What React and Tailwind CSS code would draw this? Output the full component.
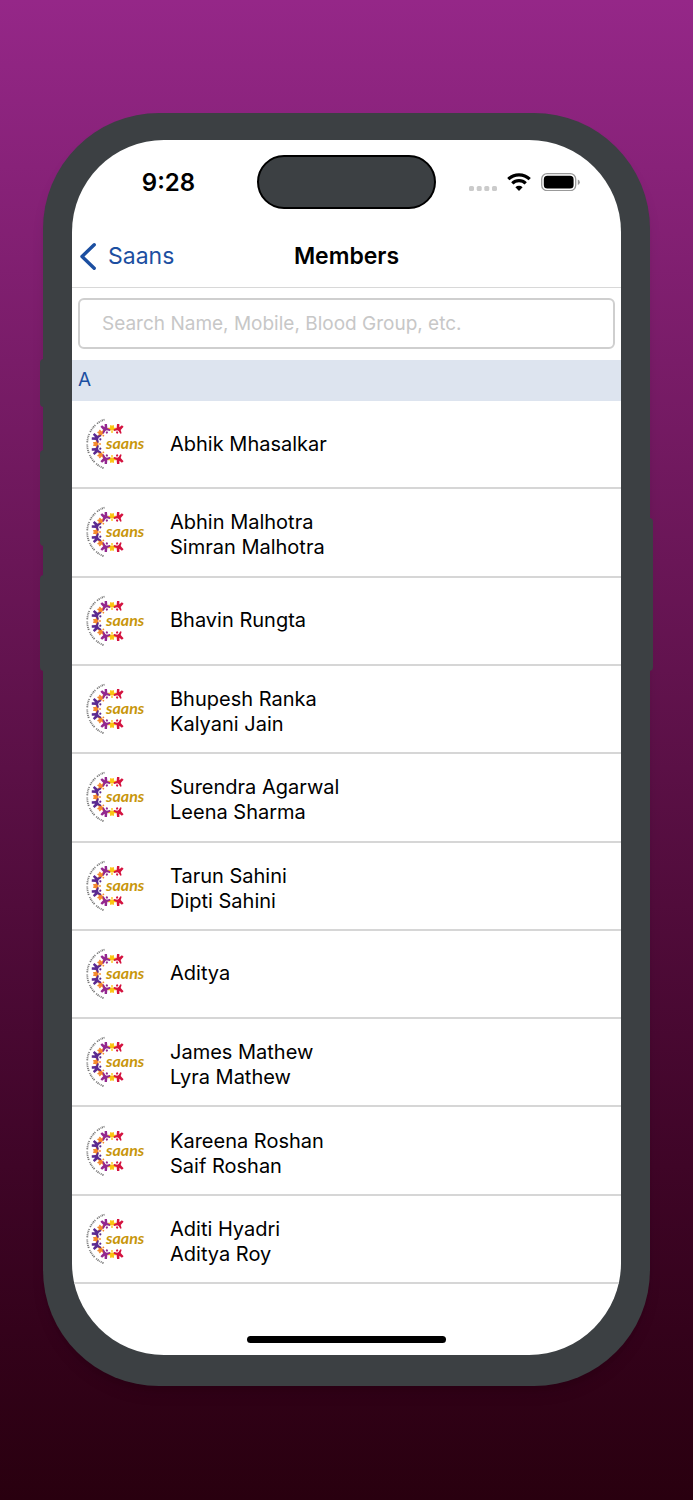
import React from "react";

const members = [
    ["Abhik Mhasalkar"],
    ["Abhin Malhotra", "Simran Malhotra"],
    ["Bhavin Rungta"],
    ["Bhupesh Ranka", "Kalyani Jain"],
    ["Surendra Agarwal", "Leena Sharma"],
    ["Tarun Sahini", "Dipti Sahini"],
    ["Aditya"],
    ["James Mathew", "Lyra Mathew"],
    ["Kareena Roshan", "Saif Roshan"],
    ["Aditi Hyadri", "Aditya Roy"],
];

// people standing around the open ring, angle measured from 12 o'clock
const adults = [
    { angle: 24, color: "#d4123f" },
    { angle: -24, color: "#93278f" },
    { angle: -68, color: "#5b2a91" },
    { angle: -112, color: "#5b2a91" },
    { angle: -156, color: "#93278f" },
    { angle: 156, color: "#d4123f" },
];

const children = [
    { angle: 0, color: "#fbc40f" },
    { angle: -46, color: "#f58a2c" },
    { angle: -90, color: "#f58a2c" },
    { angle: -134, color: "#f58a2c" },
    { angle: 180, color: "#fbc40f" },
];

const SaansLogo = () => (
    <svg viewBox="0 0 60 52" className="w-[60px] h-[52px] shrink-0" role="img" aria-label="Saans">
        <path
            d="M18.5 1.5 A26 26 0 0 0 18.5 50.5"
            fill="none"
            stroke="#777"
            strokeWidth="1.8"
            strokeDasharray="1 0.8 1.2 0.7 0.8 0.9 1.1 0.8 1.3 2.2"
        />
        {children.map(({ angle, color }) => (
            <g key={angle} transform={`rotate(${angle} 26 26)`} fill={color}>
                <path d="M24 7.2 L25.6 7.2 L26 8.6 L26.4 7.2 L28 7.2 L27.9 9.8 L30.4 9.8 L30.4 11.6 L27.9 12.4 L24.1 12.4 L21.6 11.6 L21.6 9.8 L24.1 9.8 Z" />
                <circle cx="26" cy="14" r="0.9" />
            </g>
        ))}
        {adults.map(({ angle, color }) => (
            <g key={angle} transform={`rotate(${angle} 26 26)`} fill={color}>
                <path d="M22.4 5.6 L24.6 4.8 L26 7.8 L27.4 4.8 L29.6 5.6 L28.2 9.6 L30.4 12.2 L29.4 13.2 L26.8 11.4 L25.2 11.4 L22.6 13.2 L21.6 12.2 L23.8 9.6 Z" />
                <circle cx="26" cy="13.4" r="1.1" />
            </g>
        ))}
        <text
            x="20"
            y="31"
            fill="#c8960c"
            fontSize="16"
            fontStyle="italic"
            fontWeight="700"
            fontFamily="Lato, sans-serif"
        >
            saans
        </text>
    </svg>
);

const StatusBar = () => (
    <div className="grid grid-cols-[1fr_auto_1fr] items-center pt-[15px] pb-4">
        <span className="pl-2 pt-[2px] text-center text-2xl font-semibold">9:28</span>
        <div className="h-[54px] w-[179px] rounded-full border-2 border-black bg-[#3c4043]" />
        <div className="flex items-center justify-center gap-[10px] pr-2">
            <svg viewBox="0 0 28 5" className="mt-3 h-[5px] w-7" fill="#cbcbcb">
                <rect x="0" width="5" height="5" rx="1.6" />
                <rect x="7.7" width="5" height="5" rx="1.6" />
                <rect x="15.3" width="5" height="5" rx="1.6" />
                <rect x="23" width="5" height="5" rx="1.6" />
            </svg>
            <svg viewBox="0 0 24 18" className="h-[18px] w-6" fill="none" stroke="#000">
                <path d="M1.3 6.2 A15.2 15.2 0 0 1 22.7 6.2" strokeWidth="3.2" />
                <path d="M5.3 10.3 A9.5 9.5 0 0 1 18.7 10.3" strokeWidth="3.2" />
                <path d="M12 18 L8.4 14.3 A5.2 5.2 0 0 1 15.6 14.3 Z" fill="#000" stroke="none" />
            </svg>
            <svg viewBox="0 0 39 18" className="h-[18px] w-[39px]">
                <rect x="0.7" y="0.7" width="34" height="17" rx="5.4" fill="none" stroke="#999" strokeWidth="1.3" />
                <rect x="2.8" y="2.8" width="29.8" height="12.8" rx="3.6" fill="#000" />
                <path d="M36.8 6.4 Q38.8 7.2 38.8 9.2 Q38.8 11.2 36.8 12 Z" fill="#999" />
            </svg>
        </div>
    </div>
);

const NavBar = () => (
    <header className="grid h-[63px] grid-cols-[1fr_auto_1fr] items-center border-b border-[#d8d8d8]">
        <button type="button" className="flex items-center gap-3 pl-2 text-[23px] text-[#1c4fa1]">
            <svg viewBox="0 0 16 27" className="h-[27px] w-4" fill="none" stroke="currentColor">
                <path d="M14.2 1.8 L2 13.5 L14.2 25.2" strokeWidth="3.4" strokeLinecap="round" strokeLinejoin="round" />
            </svg>
            Saans
        </button>
        <h1 className="text-[23px] font-semibold">Members</h1>
    </header>
);

const MemberRow = ({ names }) => (
    <li className="flex items-center gap-6 border-b-2 border-[#d6d6d6] pl-[14px]">
        <SaansLogo />
        <div className={names.length > 1 ? "pt-[6px] text-xl leading-[25px]" : "text-xl leading-[25px]"}>
            {names.map((name) => (
                <p key={name}>{name}</p>
            ))}
        </div>
    </li>
);

export default function App() {
    return (
        <div className="min-h-screen bg-linear-to-b from-[#952788] to-[#29000f] px-[43px] pt-[113px] pb-[114px] font-[Inter,sans-serif] text-black">
            <div className="relative rounded-[116px] bg-[#3c4043] px-[29px] pt-[27px] pb-[31px] shadow-lg">
                {/* side buttons */}
                <div className="absolute top-[246px] -left-[3px] h-12 w-1 rounded-l-sm bg-[#3c4043]" />
                <div className="absolute top-[337px] -left-[3px] h-24 w-1 rounded-l-sm bg-[#3c4043]" />
                <div className="absolute top-[462px] -left-[3px] h-24 w-1 rounded-l-sm bg-[#3c4043]" />
                <div className="absolute top-[405px] -right-[3px] h-[153px] w-1 rounded-r-sm bg-[#3c4043]" />

                <div className="overflow-hidden rounded-[92px] bg-white">
                    <StatusBar />
                    <NavBar />

                    <main>
                        <div className="px-[6px] pt-[10px] pb-[11px]">
                            <input
                                type="text"
                                aria-label="Search members"
                                placeholder="Search Name, Mobile, Blood Group, etc."
                                className="h-[51px] w-full rounded-md border-2 border-[#cfcfcf] px-[22px] text-[19px] placeholder:text-[#c7c7c7]"
                            />
                        </div>

                        <h2 className="flex h-[41px] items-center bg-[#dde4ef] px-[6px] text-[19px] text-[#1c4fa1]">A</h2>
                        <ul className="grid min-h-[883px] auto-rows-fr">
                            {members.map((names) => (
                                <MemberRow key={names[0]} names={names} />
                            ))}
                        </ul>
                    </main>

                    <div className="flex justify-center pt-[52px] pb-3">
                        <div className="h-[7px] w-[199px] rounded-full bg-black" />
                    </div>
                </div>
            </div>
        </div>
    );
}
